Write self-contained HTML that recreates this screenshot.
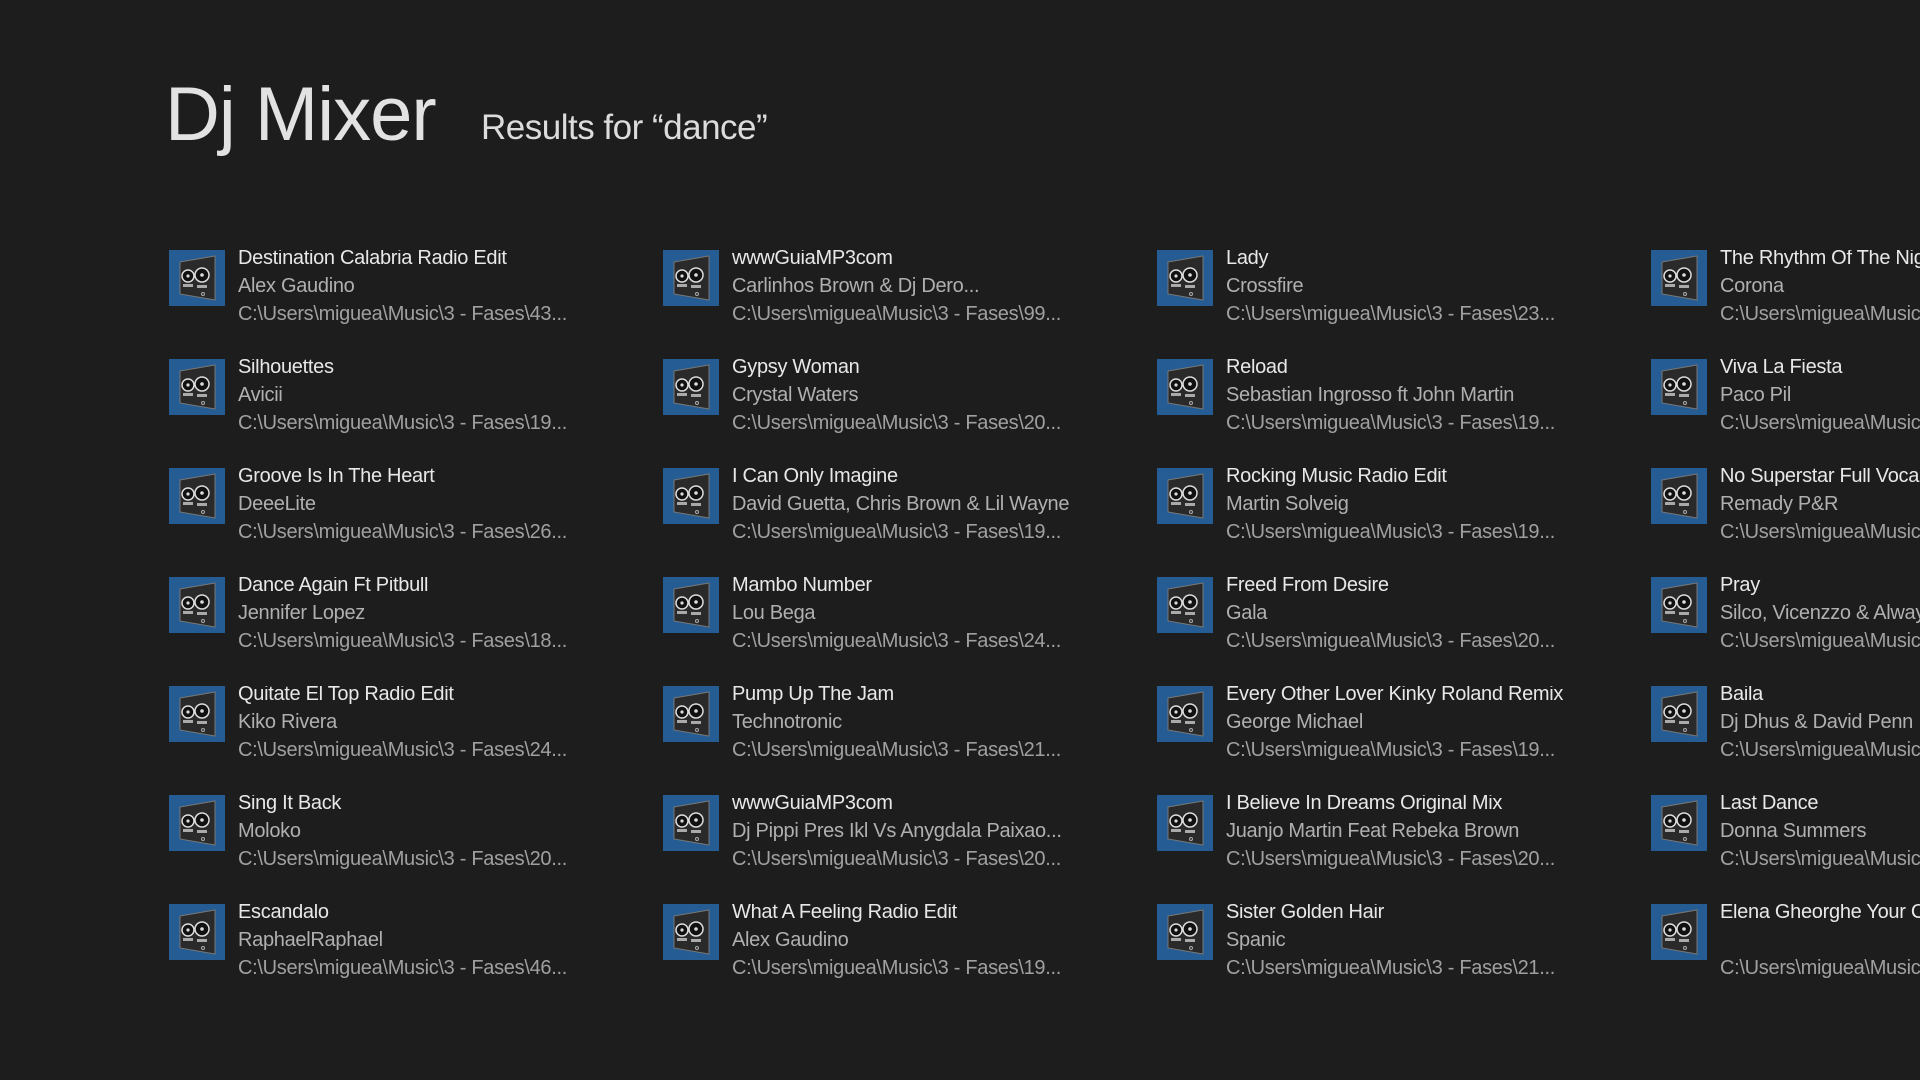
<!DOCTYPE html>
<html><head><meta charset="utf-8"><style>
body{margin:0;width:1920px;height:1080px;background:#1d1d1d;overflow:hidden;font-family:"Liberation Sans",sans-serif;position:relative}
.h1{position:absolute;left:165px;top:77px;font-size:76px;color:#e2e2e2;letter-spacing:-1px;font-weight:300;line-height:1}
.h2{position:absolute;left:481px;top:110px;font-size:35px;color:#dcdcdc;line-height:1;letter-spacing:-0.5px}
.it{position:absolute;width:480px;height:100px;white-space:nowrap;overflow:hidden}
.ic{position:absolute;left:0;top:0;width:56px;height:56px;background:#245c93}
.tx{position:absolute;left:69px;top:-6px;font-size:20px;line-height:28px;letter-spacing:-0.3px}
.a{color:#e8e8e8}.b{color:#b0b0b0}.c{color:#a0a0a0;height:24px;overflow:hidden}
</style></head><body>
<div class="h1">Dj Mixer</div>
<div class="h2">Results for “dance”</div>
<svg width="0" height="0" style="position:absolute"><defs><symbol id="dev" viewBox="0 0 56 56">
<polygon points="11,12 46,6 46,50 11,44" fill="#2a2a2a" stroke="#777" stroke-width="1"/>
<circle cx="19" cy="26" r="6" fill="#111" stroke="#ddd" stroke-width="1.5"/><circle cx="19" cy="26" r="1.6" fill="#ddd"/>
<circle cx="33" cy="25" r="7" fill="#111" stroke="#ddd" stroke-width="1.5"/><circle cx="33" cy="25" r="1.8" fill="#ddd"/>
<rect x="14" y="34" width="10" height="3" fill="#aaa"/><rect x="28" y="35" width="10" height="3" fill="#aaa"/>
<circle cx="34" cy="44" r="1.5" fill="none" stroke="#aaa"/></symbol></defs></svg>
<div id="g"></div>
<script>
var d=[
["Destination Calabria Radio Edit","Alex Gaudino","43"],["Silhouettes","Avicii","19"],["Groove Is In The Heart","DeeeLite","26"],["Dance Again Ft Pitbull","Jennifer Lopez","18"],["Quitate El Top Radio Edit","Kiko Rivera","24"],["Sing It Back","Moloko","20"],["Escandalo","RaphaelRaphael","46"],
["wwwGuiaMP3com","Carlinhos Brown &amp; Dj Dero...","99"],["Gypsy Woman","Crystal Waters","20"],["I Can Only Imagine","David Guetta, Chris Brown &amp; Lil Wayne","19"],["Mambo Number","Lou Bega","24"],["Pump Up The Jam","Technotronic","21"],["wwwGuiaMP3com","Dj Pippi Pres Ikl Vs Anygdala  Paixao...","20"],["What A Feeling Radio Edit","Alex Gaudino","19"],
["Lady","Crossfire","23"],["Reload","Sebastian Ingrosso ft John Martin","19"],["Rocking Music Radio Edit","Martin Solveig","19"],["Freed From Desire","Gala","20"],["Every Other Lover Kinky Roland Remix","George Michael","19"],["I Believe In Dreams Original Mix","Juanjo Martin Feat Rebeka Brown","20"],["Sister Golden Hair","Spanic","21"],
["The Rhythm Of The Night","Corona",""],["Viva La Fiesta","Paco Pil",""],["No Superstar Full Vocal","Remady P&amp;R",""],["Pray","Silco, Vicenzzo &amp; Always",""],["Baila","Dj Dhus &amp; David Penn",""],["Last Dance","Donna Summers",""],["Elena Gheorghe Your Cool","",""]];
var h="";
for(var i=0;i<d.length;i++){var c=Math.floor(i/7),r=i%7;var x=169+c*494,y=250+r*109;
var p=d[i][2]?"C:\\Users\\miguea\\Music\\3 - Fases\\"+d[i][2]+"...":"C:\\Users\\miguea\\Music\\3 - Fases\\";
h+='<div class="it" style="left:'+x+'px;top:'+y+'px"><svg class="ic" viewBox="0 0 56 56"><rect width="56" height="56" fill="#245c93"/><use href="#dev"/></svg><div class="tx"><div class="a">'+d[i][0]+'</div><div class="b">'+(d[i][1]||"&nbsp;")+'</div><div class="c">'+p+'</div></div></div>';}
document.getElementById("g").innerHTML=h;
</script>
</body></html>
